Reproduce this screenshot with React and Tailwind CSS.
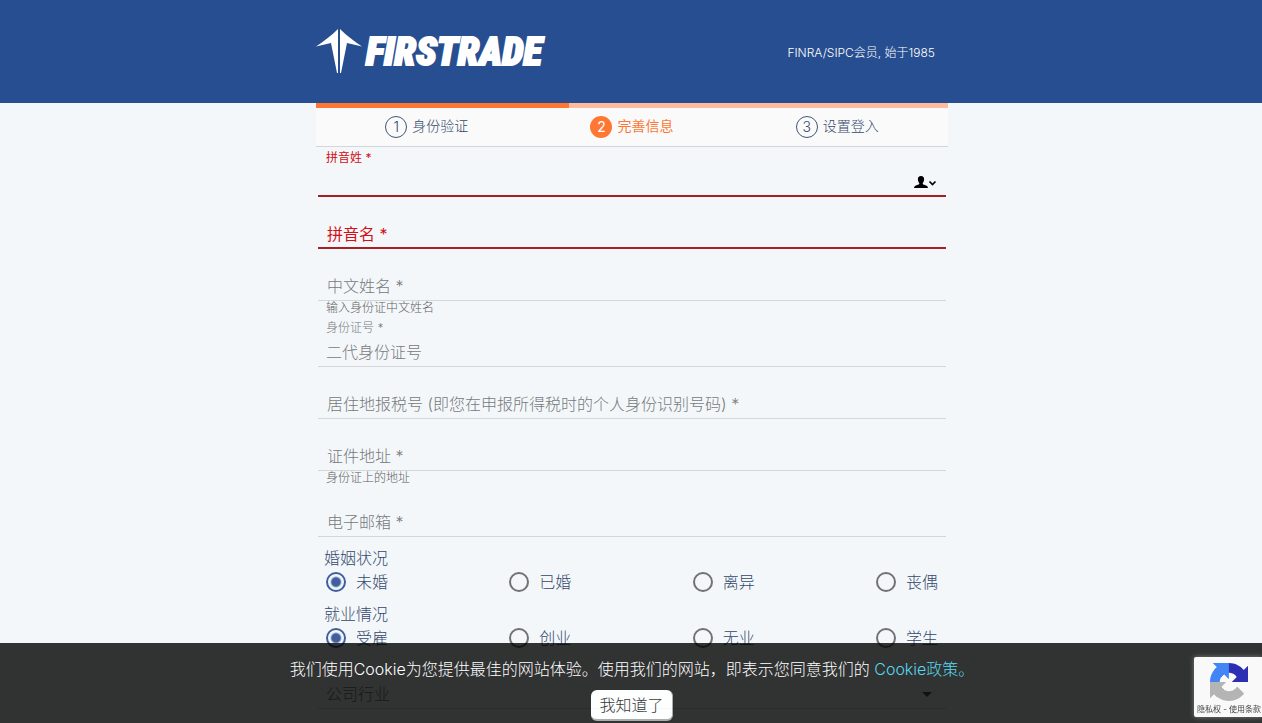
import { useState } from 'react';

const STEPS = ['身份验证', '完善信息', '设置登入'];

const FIELDS = [
    { id: 'lastName', label: '拼音姓', error: true, floating: true, autofill: true },
    { id: 'firstName', label: '拼音名', error: true },
    { id: 'chineseName', label: '中文姓名', hint: '输入身份证中文姓名' },
    { id: 'idNumber', label: '身份证号', floating: true, placeholder: '二代身份证号' },
    { id: 'taxId', label: '居住地报税号 (即您在申报所得税时的个人身份识别号码)' },
    { id: 'address', label: '证件地址', hint: '身份证上的地址' },
    { id: 'email', label: '电子邮箱' },
];

function Logo() {
    return (
        <a href="#" aria-label="Firstrade" className="flex items-center gap-1 text-white">
            <svg width="46" height="45" viewBox="0 0 46 45" fill="currentColor" aria-hidden="true">
                <path d="M22 0 C15 7 8 12 0 17.500 L15 14 L21 44 H22 Z" />
                <path d="M24 0 C31 7 38 12 46 17.500 L31 14 L25 44 H24 Z" />
            </svg>
            <span className="font-['Roboto_Condensed','Anton','Impact',sans-serif] text-[39px] leading-10 font-black italic [-webkit-text-stroke:2px_white]">
                FIRSTRADE
            </span>
        </a>
    );
}

function Stepper({ current }) {
    return (
        <div className="border-b border-[#d3d7da] bg-[#fafafa]">
            <div className="h-[5px] bg-[#ffbba0]">
                <div className="h-full w-2/5 bg-[#ff7733]" />
            </div>
            <ol className="grid grid-cols-3 px-2 py-2 text-sm leading-[22px] text-[#33486c]">
                {STEPS.map((step, i) => (
                    <li
                        key={step}
                        className={i === current ? 'flex justify-center gap-[5px] font-normal text-[#ff7733]' : 'flex justify-center gap-[5px]'}
                    >
                        <span
                            className={
                                i === current
                                    ? 'flex size-[22px] items-center justify-center rounded-full bg-[#ff7733] text-white'
                                    : 'flex size-[22px] items-center justify-center rounded-full border border-[#405579]'
                            }
                        >
                            {i + 1}
                        </span>
                        <span className="leading-5">{step}</span>
                    </li>
                ))}
            </ol>
        </div>
    );
}

function Field({ id, label, hint, error, floating, placeholder, autofill }) {
    const line = error ? 'border-b-2 border-[#a81e25]' : 'border-b border-[#d3d7da]';
    const color = error ? 'font-normal text-[#d50d14]' : 'text-[#77797b]';

    return (
        <div>
            <div className="h-[22px] px-2">
                {floating && (
                    <label htmlFor={id} className={`block text-xs leading-[22px] ${color}`}>
                        {label} *
                    </label>
                )}
            </div>
            <div className={`grid h-7 items-center ${line}`}>
                <input
                    id={id}
                    type="text"
                    placeholder={placeholder}
                    className="col-start-1 row-start-1 h-full w-full bg-transparent px-2 pb-0.5 text-base text-[#344a6e] outline-none placeholder:text-[#77797b]"
                />
                {!floating && (
                    <label
                        htmlFor={id}
                        className={`pointer-events-none col-start-1 row-start-1 px-[9px] text-base ${error ? '' : 'pb-0.5'} ${color}`}
                    >
                        {label} *
                    </label>
                )}
                {autofill && (
                    <button type="button" aria-label="自动填充" className="col-start-1 row-start-1 mr-[9px] justify-self-end">
                        <svg width="23" height="12" viewBox="0 0 23 12" aria-hidden="true">
                            <path d="M7 0 C4.800 0 3.800 1.500 3.900 3.500 C4 5.500 4.800 6.500 5.300 7.200 C5.500 8.300 4.500 8.500 2.500 9.200 C.8 9.800 .2 10.500 0 12 H14 C13.800 10.500 13.200 9.800 11.500 9.200 C9.500 8.500 8.500 8.300 8.700 7.200 C9.200 6.500 10 5.500 10.100 3.500 C10.200 1.500 9.200 0 7 0 Z" fill="#000" />
                            <path d="M15.500 5.500 L18.500 8.500 L21.500 5.500" fill="none" stroke="#000" strokeWidth="1.700" />
                        </svg>
                    </button>
                )}
            </div>
            {hint && <p className="px-2 text-xs leading-[14px] text-[#5c5e60]">{hint}</p>}
        </div>
    );
}

function RadioGroup({ name, title, options }) {
    const [value, setValue] = useState(options[0]);

    return (
        <fieldset className="leading-6 text-[#33486c]">
            <legend className="px-1.5">{title}</legend>
            <div className="flex justify-between px-2">
                {options.map((option) => (
                    <label key={option} className="flex items-center gap-2.5">
                        <input
                            type="radio"
                            name={name}
                            checked={value === option}
                            onChange={() => setValue(option)}
                            className="size-5 appearance-none rounded-full border-2 border-[#727272] checked:border-[#3f5f9f] checked:bg-[radial-gradient(circle,#3f5f9f_4px,transparent_6px)]"
                        />
                        {option}
                    </label>
                ))}
            </div>
        </fieldset>
    );
}

function CookieBar({ onAccept }) {
    return (
        <div className="fixed inset-x-0 bottom-0 flex flex-col items-center gap-[9px] bg-black pt-3.5 pb-0.5 pl-0.5 text-white opacity-80">
            <p className="text-center leading-6">
                我们使用Cookie为您提供最佳的网站体验。使用我们的网站，即表示您同意我们的{' '}
                <a href="#" className="text-[#31d0ea]">Cookie政策。</a>
            </p>
            <button
                type="button"
                onClick={onAccept}
                className="rounded-md border-r border-b-2 border-[#999] bg-white px-2 pt-[3px] pb-0.5 leading-6 text-black"
            >
                我知道了
            </button>
        </div>
    );
}

function RecaptchaBadge() {
    return (
        <div className="fixed right-0 bottom-1.5 flex h-[60px] w-[68px] flex-col items-center justify-between rounded-l-xs bg-[#f9f9f9] pt-1.5 pb-0.5 pl-0.5 shadow-[0_0_5px_gray]">
            <svg width="38" height="38" viewBox="0 0 64 64" aria-hidden="true">
                <path d="M64 31.955l-.033-1.370V4.687l-7.160 7.160C50.948 4.674 42.033.093 32.050.093c-10.400 0-19.622 4.960-25.458 12.640l11.736 11.860a15.550 15.550 0 0 1 4.754-5.334c2.050-1.600 4.952-2.906 8.968-2.906.485 0 .86.057 1.135.163 4.976.393 9.288 3.140 11.828 7.124l-8.307 8.307L64 31.953" fill="#2a2fb4" />
                <path d="M31.862.094l-1.370.033H4.594l7.160 7.160C4.580 13.147 0 22.060 0 32.046c0 10.400 4.960 19.622 12.640 25.458L24.500 45.768a15.550 15.550 0 0 1-5.334-4.754c-1.600-2.050-2.906-4.952-2.906-8.968 0-.485.057-.86.163-1.135.393-4.976 3.140-9.288 7.124-11.828l8.307 8.307L31.860.095" fill="#4285f4" />
                <path d="M.001 32.045l.033 1.370v25.898l7.160-7.160c5.860 7.173 14.774 11.754 24.760 11.754 10.400 0 19.622-4.960 25.458-12.640l-11.736-11.860a15.550 15.550 0 0 1-4.754 5.334c-2.050 1.600-4.952 2.906-8.968 2.906-.485 0-.86-.057-1.135-.163-4.976-.393-9.288-3.140-11.828-7.124l8.307-8.307c-10.522.04-22.400.066-27.295-.005" fill="#b4b4b4" />
            </svg>
            <p className="text-[8px] leading-3 font-normal whitespace-nowrap text-[#444]">
                <a href="#">隐私权</a> - <a href="#">使用条款</a>
            </p>
        </div>
    );
}

export default function App() {
    const [showCookies, setShowCookies] = useState(true);

    return (
        <div className="min-h-screen bg-[#f3f7fa] font-['Inter','Noto_Sans_CJK_SC',sans-serif] font-light text-base">
            <header className="bg-[#274e90] py-[29px]">
                <div className="mx-auto flex w-full max-w-[634px] items-center justify-between pr-[13px] pl-0.5">
                    <Logo />
                    <p className="pt-0.5 text-xs text-white">FINRA/SIPC会员, 始于1985</p>
                </div>
            </header>

            <main className="mx-auto w-full max-w-[634px] pl-0.5">
                <Stepper current={1} />
                <form className="flex flex-col px-0.5">
                    <div className="flex flex-col gap-0.5">
                        {FIELDS.map((field) => (
                            <Field key={field.id} {...field} />
                        ))}
                    </div>
                    <div className="flex flex-col gap-2 pt-[9px]">
                        <RadioGroup name="marital" title="婚姻状况" options={['未婚', '已婚', '离异', '丧偶']} />
                        <RadioGroup name="employment" title="就业情况" options={['受雇', '创业', '无业', '学生']} />
                    </div>
                    <div className="mt-[31px] grid h-7 items-center border-b border-[#d3d7da]">
                        <select
                            aria-label="公司行业"
                            className="col-start-1 row-start-1 w-full appearance-none bg-transparent px-2 pb-0.5 text-[#77797b] outline-none"
                        >
                            <option>公司行业</option>
                        </select>
                        <svg width="10" height="5" viewBox="0 0 10 5" className="pointer-events-none col-start-1 row-start-1 mr-3.5 justify-self-end" aria-hidden="true">
                            <path d="M0 0 H10 L5 5 Z" fill="#555" />
                        </svg>
                    </div>
                </form>
            </main>

            {showCookies && <CookieBar onAccept={() => setShowCookies(false)} />}
            <RecaptchaBadge />
        </div>
    );
}
